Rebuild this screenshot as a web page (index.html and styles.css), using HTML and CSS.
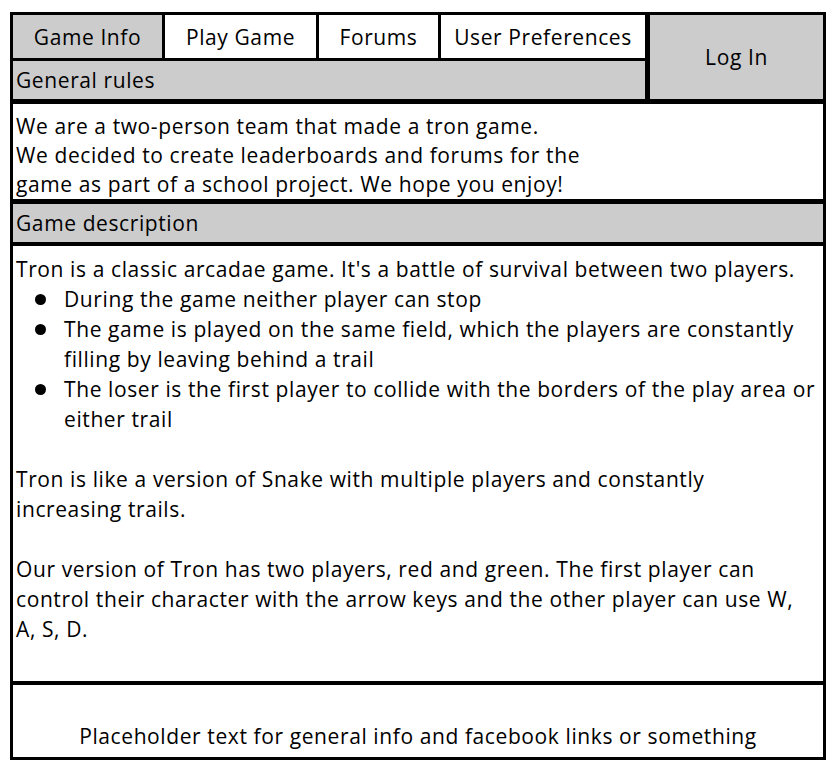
FILE: index.html
```html
<!DOCTYPE html>
<html>
<head>
<meta charset="utf-8">
<link rel="stylesheet" href="styles.css">
</head>
<body>
<div class="page">
  <div class="header">
    <div class="header-left">
      <div class="tabs">
        <div class="tab tab-active">Game Info</div>
        <div class="tab tab-play">Play Game</div>
        <div class="tab tab-forums">Forums</div>
        <div class="tab tab-prefs">User Preferences</div>
      </div>
      <div class="bar bar-rules">General rules</div>
    </div>
    <div class="login">Log In</div>
  </div>
  <div class="intro">We are a two-person team that made a tron game.<br>We decided to create leaderboards and forums for the<br>game as part of a school project. We hope you enjoy!</div>
  <div class="bar bar-desc">Game description</div>
  <div class="content">
    <p>Tron is a classic arcadae game. It's a battle of survival between two players.</p>
    <ul>
      <li>During the game neither player can stop</li>
      <li>The game is played on the same field, which the players are constantly<br>filling by leaving behind a trail</li>
      <li>The loser is the first player to collide with the borders of the play area or<br>either trail</li>
    </ul>
    <p class="gap">Tron is like a version of Snake with multiple players and constantly<br>increasing trails.</p>
    <p class="gap">Our version of Tron has two players, red and green. The first player can<br>control their character with the arrow keys and the other player can use W,<br>A, S, D.</p>
  </div>
  <div class="footer">Placeholder text for general info and facebook links or something</div>
</div>
</body>
</html>
```
FILE: styles.css
```css
* { box-sizing: border-box; }
body {
  margin: 0;
  background: #ffffff;
  font-family: "Open Sans", "Noto Sans", sans-serif;
  font-size: 21px;
  letter-spacing: 0.6px;
  color: #000;
}
.page {
  margin: 12px 0 0 10px;
  width: 816px;
}
.header {
  display: flex;
  height: 90px;
}
.header-left {
  width: 638px;
  display: flex;
  flex-direction: column;
}
.tabs {
  display: flex;
  height: 49px;
}
.tab {
  border: 3px solid #000;
  margin-right: -3px;
  display: flex;
  align-items: center;
  justify-content: center;
  background: #fff;
  white-space: nowrap;
}
.tab-active { width: 155px; background: #cccccc; }
.tab-play { width: 157px; }
.tab-forums { width: 125px; }
.tab-prefs { width: 210px; }
.bar {
  border: 3px solid #000;
  background: #cccccc;
  display: flex;
  align-items: center;
  padding-left: 3px;
  white-space: nowrap;
}
.bar-rules {
  margin-top: -3px;
  height: 44px;
}
.login {
  flex: 1;
  margin-left: -1px;
  border: 3px solid #000;
  background: #cccccc;
  display: flex;
  align-items: center;
  justify-content: center;
}
.intro {
  margin-top: -1px;
  border: 3px solid #000;
  height: 101px;
  padding: 8px 0 0 3px;
  line-height: 29px;
  white-space: nowrap;
}
.bar-desc {
  margin-top: -1px;
  height: 44px;
}
.content {
  margin-top: -2px;
  border: 3px solid #000;
  height: 441px;
  padding: 8px 0 0 3px;
  line-height: 30px;
  white-space: nowrap;
}
.content p { margin: 0; }
.content p.gap { margin-top: 30px; }
.content ul {
  margin: 0;
  padding-left: 48px;
  list-style: none;
}
.content li { position: relative; }
.content li::before {
  content: "";
  position: absolute;
  left: -29px;
  top: 10px;
  width: 11px;
  height: 11px;
  border-radius: 50%;
  background: #000;
}
.footer {
  margin-top: -2px;
  border: 3px solid #000;
  height: 78px;
  display: flex;
  align-items: flex-end;
  justify-content: center;
  padding-bottom: 7px;
  white-space: nowrap;
}
```
